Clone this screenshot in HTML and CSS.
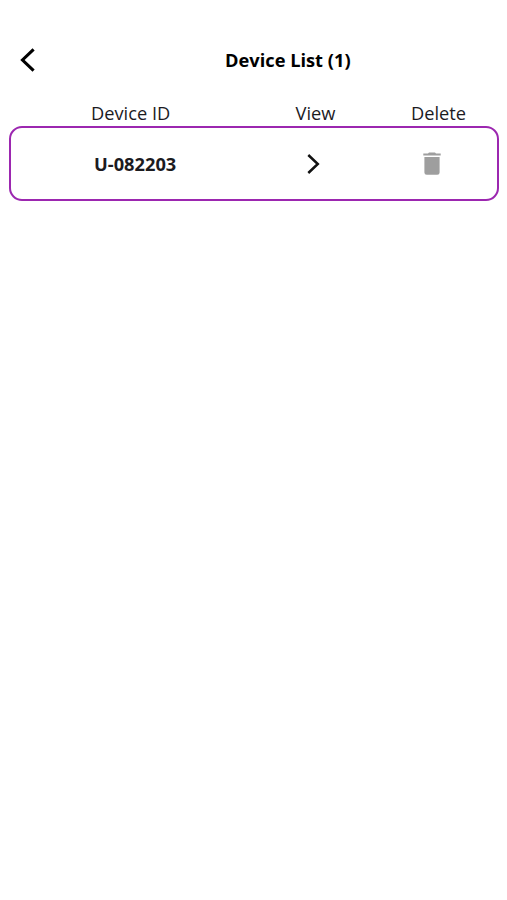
FILE: index.html
```html
<!DOCTYPE html>
<html lang="en">
<head>
<meta charset="utf-8">
<title>Device List</title>
<link rel="stylesheet" href="styles.css">
</head>
<body>
<header class="topbar">
  <button class="icon-button" aria-label="Back"><svg class="back" viewBox="0 0 15 24"><path d="M13.600 1.300 2.500 12l11.100 10.700"/></svg></button>
  <h1 class="title">Device List (1)</h1>
</header>
<main>
  <div class="columns"><span class="id">Device ID</span><span class="view">View</span><span class="delete">Delete</span></div>
  <div class="device">
    <strong class="device-id">U-082203</strong>
    <button class="icon-button" aria-label="View"><svg class="chevron" viewBox="0 0 13 20"><path d="M1.300 1 10.800 10l-9.500 9"/></svg></button>
    <button class="icon-button" aria-label="Delete"><svg class="trash" viewBox="0 0 18 23"><path d="M.3 1.500H5L6 .4h6l1 1.100h4.700V3.600H.3zM1.400 5h15.200V20.500a2.300 2.300 0 0 1-2.300 2.300H3.700a2.300 2.300 0 0 1-2.300-2.300z"/></svg></button>
  </div>
</main>
</body>
</html>
```

FILE: styles.css
```css
* { box-sizing: border-box; }
body { margin: 0; min-height: 900px; background: #fff; color: #1c1b1f; font-family: "Open Sans", sans-serif; font-size: 18.25px; }
.topbar { display: flex; align-items: center; height: 72px; margin-top: 24px; padding-left: 20px; }
.icon-button { display: block; padding: 0; border: 0; background: none; }
.icon-button svg { display: block; }
.back { width: 15px; height: 24px; fill: none; stroke: #000; stroke-width: 3.1; }
.title { margin: 0 0 0 190px; font-size: 18.25px; line-height: 24px; font-weight: 700; color: #000; white-space: nowrap; }
.columns { display: flex; height: 30px; padding-left: 91px; line-height: 33px; white-space: nowrap; }
.id { width: 204.500px; }
.view { width: 115.500px; }
.device { display: flex; align-items: center; height: 75px; margin: 0 8px 0 8.500px; padding-left: 83.500px; border: 2px solid #9c27b0; border-radius: 13px; }
.device-id { width: 212.500px; font-size: 18.25px; line-height: 24px; }
.chevron { width: 13px; height: 20px; fill: none; stroke: #111; stroke-width: 2.5; }
.trash { width: 18px; height: 23px; margin-left: 103px; fill: #9e9e9e; }
```
